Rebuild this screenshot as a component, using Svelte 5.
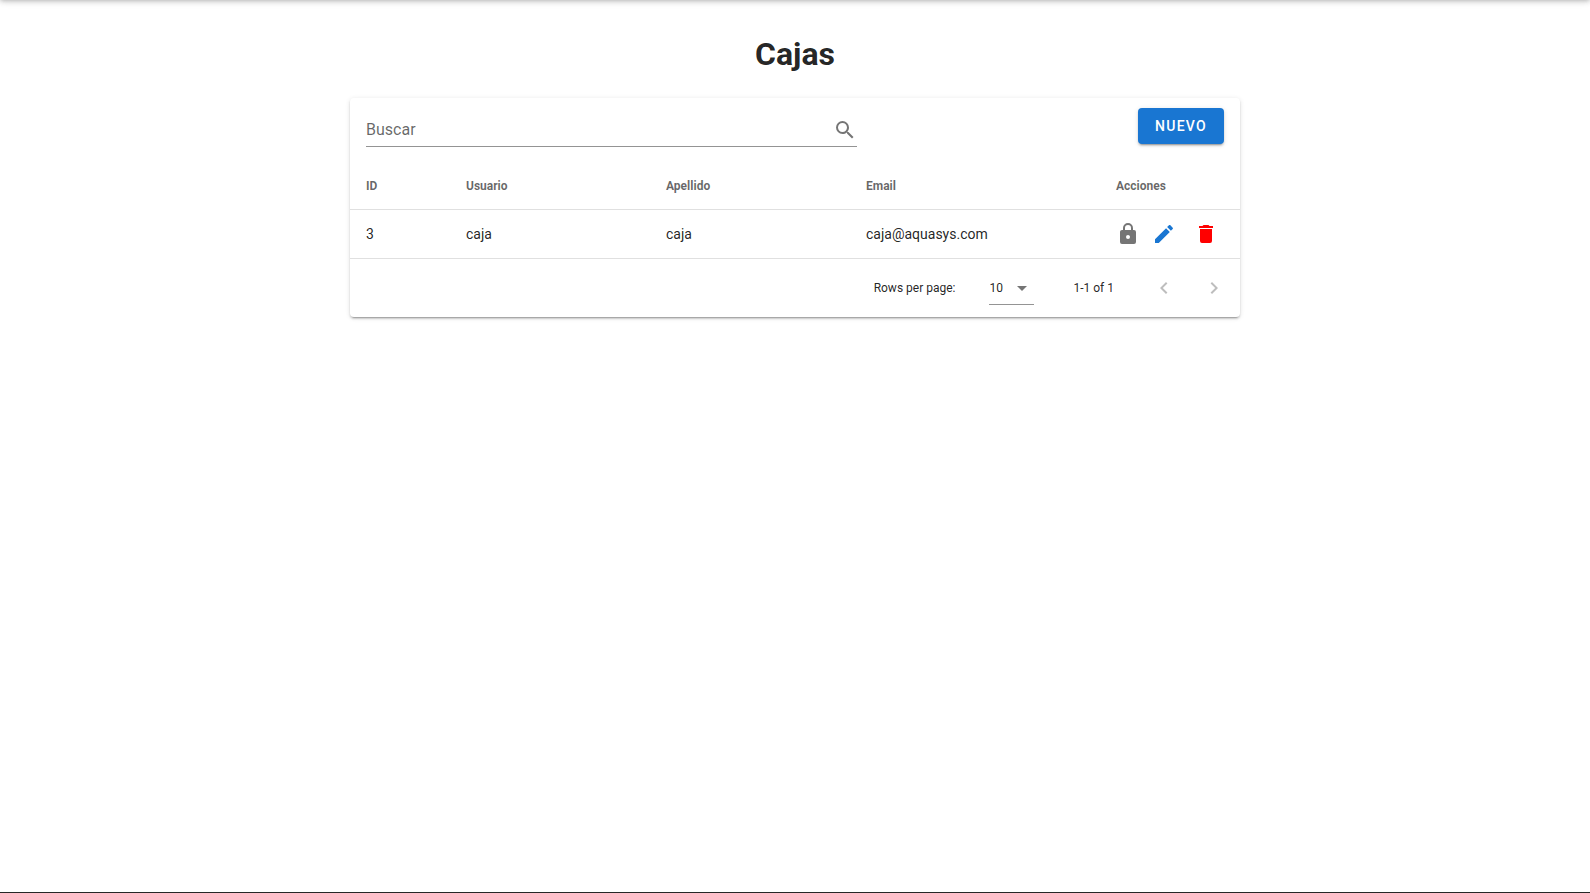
<script>
  let search = $state('');
  let perPage = $state('10');
  const users = [{ id: 3, usuario: 'caja', apellido: 'caja', email: 'caja@aquasys.com' }];
  let rows = $derived(
    users.filter((u) => Object.values(u).join(' ').toLowerCase().includes(search.toLowerCase()))
  );
</script>

<div class="page">
  <div class="appbar"></div>
  <main>
    <h1>Cajas</h1>
    <section class="card">
      <div class="toolbar">
        <label class="search">
          <input type="text" placeholder="Buscar" aria-label="Buscar" bind:value={search} />
          <svg viewBox="0 0 24 24" aria-hidden="true"><path d="M9.5,3A6.5,6.5 0 0,1 16,9.5C16,11.11 15.41,12.59 14.44,13.73L14.71,14H15.5L20.5,19L19,20.5L14,15.5V14.71L13.73,14.44C12.59,15.41 11.11,16 9.5,16A6.5,6.5 0 0,1 3,9.5A6.5,6.5 0 0,1 9.5,3M9.5,5C7,5 5,7 5,9.5C5,12 7,14 9.5,14C12,14 14,12 14,9.5C14,7 12,5 9.5,5Z" /></svg>
        </label>
        <button class="new" type="button">NUEVO</button>
      </div>
      <table>
        <colgroup>
          <col class="c-id" /><col class="c-name" /><col class="c-name" /><col class="c-email" /><col />
        </colgroup>
        <thead>
          <tr><th>ID</th><th>Usuario</th><th>Apellido</th><th>Email</th><th>Acciones</th></tr>
        </thead>
        <tbody>
          {#each rows as user (user.id)}
            <tr>
              <td>{user.id}</td>
              <td>{user.usuario}</td>
              <td>{user.apellido}</td>
              <td>{user.email}</td>
              <td>
                <div class="actions">
                  <button class="lock" type="button" aria-label="Bloquear">
                    <svg viewBox="0 0 24 24"><path d="M12,17A2,2 0 0,0 14,15C14,13.89 13.1,13 12,13A2,2 0 0,0 10,15A2,2 0 0,0 12,17M18,8A2,2 0 0,1 20,10V20A2,2 0 0,1 18,22H6A2,2 0 0,1 4,20V10C4,8.89 4.9,8 6,8H7V6A5,5 0 0,1 12,1A5,5 0 0,1 17,6V8H18M12,3A3,3 0 0,0 9,6V8H15V6A3,3 0 0,0 12,3Z" /></svg>
                  </button>
                  <button class="icon edit" type="button" aria-label="Editar">
                    <svg viewBox="0 0 24 24"><path d="M20.71,7.04C21.1,6.65 21.1,6 20.71,5.63L18.37,3.29C18,2.9 17.35,2.9 16.96,3.29L15.12,5.12L18.87,8.87M3,17.25V21H6.75L17.81,9.93L14.06,6.18L3,17.25Z" /></svg>
                  </button>
                  <button class="icon delete" type="button" aria-label="Eliminar">
                    <svg viewBox="0 0 24 24"><path d="M19,4H15.5L14.5,3H9.5L8.5,4H5V6H19M6,19A2,2 0 0,0 8,21H16A2,2 0 0,0 18,19V7H6V19Z" /></svg>
                  </button>
                </div>
              </td>
            </tr>
          {/each}
        </tbody>
      </table>
      <div class="footer">
        <label for="per-page">Rows per page:</label>
        <div class="select">
          <select id="per-page" bind:value={perPage}>
            <option>5</option><option>10</option><option>15</option>
          </select>
          <svg viewBox="0 0 24 24" aria-hidden="true"><path d="M7,10L12,15L17,10H7Z" /></svg>
        </div>
        <span class="range">1-1 of 1</span>
        <div class="pager">
          <button class="icon" type="button" disabled aria-label="Previous page">
            <svg viewBox="0 0 24 24"><path d="M15.41,16.58L10.83,12L15.41,7.41L14,6L8,12L14,18L15.41,16.58Z" /></svg>
          </button>
          <button class="icon" type="button" disabled aria-label="Next page">
            <svg viewBox="0 0 24 24"><path d="M8.59,16.58L13.17,12L8.59,7.41L10,6L16,12L10,18L8.59,16.58Z" /></svg>
          </button>
        </div>
      </div>
    </section>
  </main>
  <footer class="base"></footer>
</div>

<style>
  .page {
    box-sizing: border-box;
    min-height: 100vh;
    display: flex;
    flex-direction: column;
    overflow: hidden;
    background: #fff;
    color: rgba(0, 0, 0, 0.87);
    font-family: Roboto, sans-serif;
    font-size: 16px;
    line-height: 24px;
  }
  .appbar {
    height: 64px;
    margin-top: -66px;
    box-shadow: 0 2px 4px -1px rgba(0, 0, 0, 0.2), 0 4px 5px 0 rgba(0, 0, 0, 0.14), 0 1px 10px 0 rgba(0, 0, 0, 0.12);
  }
  main {
    flex: 1;
    box-sizing: border-box;
    width: 100%;
    max-width: 922px;
    margin: 0 auto;
    padding: 32px 16px;
  }
  h1 {
    margin: 0 0 20px;
    font-size: 32px;
    line-height: 48px;
    font-weight: 700;
    text-align: center;
  }
  .card {
    border-radius: 4px;
    background: #fff;
    box-shadow: 0 3px 1px -2px rgba(0, 0, 0, 0.2), 0 2px 2px 0 rgba(0, 0, 0, 0.14), 0 1px 5px 0 rgba(0, 0, 0, 0.12);
  }
  .toolbar {
    display: flex;
    justify-content: space-between;
    align-items: flex-start;
    padding: 10px 16px 15px;
  }
  .search {
    display: flex;
    align-items: center;
    box-sizing: border-box;
    width: 491px;
    height: 39px;
    padding-top: 6px;
    border-bottom: 1px solid rgba(0, 0, 0, 0.42);
    color: rgba(0, 0, 0, 0.54);
  }
  .search input {
    flex: 1;
    min-width: 0;
    padding: 0;
    border: 0;
    outline: 0;
    background: none;
    font: inherit;
    color: rgba(0, 0, 0, 0.87);
  }
  .search input::placeholder {
    color: rgba(0, 0, 0, 0.6);
    opacity: 1;
  }
  svg {
    display: block;
    flex: none;
    width: 24px;
    height: 24px;
    fill: currentColor;
  }
  button {
    padding: 0;
    border: 0;
    background: none;
    font: inherit;
    color: inherit;
    cursor: pointer;
  }
  .new {
    height: 36px;
    min-width: 86px;
    padding: 0 16px;
    border-radius: 4px;
    background: #1976d2;
    color: #fff;
    font-size: 14px;
    font-weight: 500;
    letter-spacing: 0.09em;
    box-shadow: 0 3px 1px -2px rgba(0, 0, 0, 0.2), 0 2px 2px 0 rgba(0, 0, 0, 0.14), 0 1px 5px 0 rgba(0, 0, 0, 0.12);
  }
  table {
    width: 100%;
    table-layout: fixed;
    border-collapse: separate;
    border-spacing: 0;
  }
  .c-id { width: 100px; }
  .c-name { width: 200px; }
  .c-email { width: 250px; }
  th,
  td {
    box-sizing: border-box;
    padding: 0 16px;
    text-align: left;
    border-bottom: 1px solid rgba(0, 0, 0, 0.12);
  }
  th {
    height: 48px;
    font-size: 12px;
    font-weight: 700;
    color: rgba(0, 0, 0, 0.6);
  }
  td {
    height: 49px;
    font-size: 14px;
  }
  .actions {
    display: flex;
    align-items: center;
    justify-content: space-between;
  }
  .lock { color: rgba(0, 0, 0, 0.54); }
  .icon {
    display: grid;
    place-items: center;
    width: 36px;
    height: 36px;
    border-radius: 50%;
  }
  .edit { color: #1976d2; }
  .delete { color: #f00; }
  .footer {
    display: flex;
    align-items: center;
    justify-content: flex-end;
    height: 58px;
    padding: 0 8px;
    font-size: 12px;
  }
  .select {
    display: grid;
    align-items: center;
    justify-items: end;
    width: 45px;
    height: 32px;
    margin: 0 39px 0 34px;
    border-bottom: 1px solid rgba(0, 0, 0, 0.42);
  }
  .select select,
  .select svg {
    grid-area: 1 / 1;
  }
  .select select {
    appearance: none;
    width: 100%;
    padding: 0;
    border: 0;
    outline: 0;
    background: none;
    font: inherit;
    color: inherit;
  }
  .select svg {
    pointer-events: none;
    color: rgba(0, 0, 0, 0.54);
  }
  .pager {
    display: flex;
    gap: 14px;
    margin-left: 32px;
  }
  .pager .icon {
    color: rgba(0, 0, 0, 0.26);
    cursor: default;
  }
  .base { border-top: 1px solid #272727; }
  :global(body) { margin: 0; }
</style>
